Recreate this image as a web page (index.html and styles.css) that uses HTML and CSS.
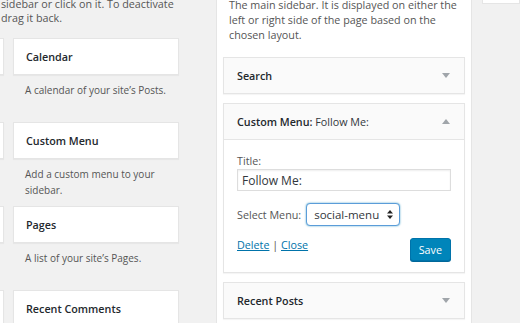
FILE: index.html
```html
<!DOCTYPE html>
<html lang="en">
<head>
  <meta charset="UTF-8">
  <title>Widgets</title>
  <link rel="stylesheet" href="styles.css">
</head>
<body>
<div class="screen">
  <section class="available">
    <p class="intro">sidebar or click on it. To deactivate<br>drag it back.</p>
    <div class="widget-grid">
      <div class="widget-item">
        <div class="widget-card"><h3>Archives</h3></div>
        <p class="widget-desc">A monthly archive of your site's Posts.</p>
      </div>
      <div class="widget-item">
        <div class="widget-card"><h3>Calendar</h3></div>
        <p class="widget-desc">A calendar of your site’s Posts.</p>
      </div>
      <div class="widget-item">
        <div class="widget-card"><h3>Categories</h3></div>
        <p class="widget-desc">A list or dropdown of categories.</p>
      </div>
      <div class="widget-item">
        <div class="widget-card"><h3>Custom Menu</h3></div>
        <p class="widget-desc">Add a custom menu to your sidebar.</p>
      </div>
      <div class="widget-item">
        <div class="widget-card"><h3>Meta</h3></div>
        <p class="widget-desc">Login, RSS, &amp; WordPress.org links.</p>
      </div>
      <div class="widget-item">
        <div class="widget-card"><h3>Pages</h3></div>
        <p class="widget-desc">A list of your site’s Pages.</p>
      </div>
      <div class="widget-item">
        <div class="widget-card"><h3>RSS</h3></div>
        <p class="widget-desc">Entries from any RSS or Atom feed.</p>
      </div>
      <div class="widget-item">
        <div class="widget-card"><h3>Recent Comments</h3></div>
        <p class="widget-desc">Your site’s most recent comments.</p>
      </div>
    </div>
  </section>

  <section class="sidebar-panel">
    <p class="sidebar-desc">The main sidebar. It is displayed on either the left or right side of the page based on the chosen layout.</p>

    <div class="widget">
      <div class="widget-top">
        <h3>Search</h3>
        <svg class="toggle" width="8" height="5" viewBox="0 0 8 5"><polygon points="0,0 8,0 4,5" /></svg>
      </div>
    </div>

    <div class="widget">
      <div class="widget-top">
        <h3>Custom Menu:<span class="in-title"> Follow Me:</span></h3>
        <svg class="toggle" width="8" height="5" viewBox="0 0 8 5"><polygon points="0,5 8,5 4,0" /></svg>
      </div>
      <div class="widget-inside">
        <label class="field-label" for="menu-title">Title:</label>
        <input class="text-input" id="menu-title" type="text" value="Follow Me:">
        <div class="select-row">
          <label for="menu-select">Select Menu:</label>
          <span class="select-wrap">
            <select id="menu-select" class="menu-select">
              <option>social-menu</option>
            </select>
            <svg class="select-arrows" width="6" height="9" viewBox="0 0 6 9"><polygon points="0,3.5 6,3.5 3,0" /><polygon points="0,5.5 6,5.5 3,9" /></svg>
          </span>
        </div>
        <div class="widget-actions">
          <div class="links"><a href="#">Delete</a> | <a href="#">Close</a></div>
          <button type="button" class="save-btn">Save</button>
        </div>
      </div>
    </div>

    <div class="widget">
      <div class="widget-top">
        <h3>Recent Posts</h3>
        <svg class="toggle" width="8" height="5" viewBox="0 0 8 5"><polygon points="0,0 8,0 4,5" /></svg>
      </div>
    </div>
  </section>

  <section class="next-sidebar">
    <div class="next-card"></div>
  </section>
</div>
</body>
</html>
```

FILE: styles.css
```css
body {
  margin: 0;
  background-color: #f1f1f1;
  font-family: "Open Sans", "Liberation Sans", sans-serif;
  font-size: 10.75px;
  color: #555;
  overflow: hidden;
}
.screen {
  display: flex;
  width: 520px;
  height: 323px;
  overflow: hidden;
}
h3 {
  margin: 0;
  font-size: inherit;
  font-weight: 600;
  color: #23282d;
}

/* available widgets */
.available {
  width: 216px;
  flex-shrink: 0;
}
.intro {
  margin: -3px 0 0;
  padding-left: 1px;
  line-height: 14px;
  white-space: nowrap;
}
.widget-grid {
  display: grid;
  grid-template-columns: 166px 166px;
  grid-auto-rows: 84px;
  column-gap: 9px;
  margin: 13px 0 0 -162px;
}
.widget-card {
  height: 37px;
  box-sizing: border-box;
  display: flex;
  align-items: center;
  padding: 0 12px;
  background-color: #fff;
  border: 1px solid #e5e5e5;
  box-shadow: 0 1px 1px rgba(0, 0, 0, 0.04);
}
.widget-desc {
  margin: 0;
  padding: 7px 10px 0 12px;
  font-size: 10px;
  line-height: 16px;
}

/* sidebar */
.sidebar-panel {
  width: 256px;
  flex-shrink: 0;
  box-sizing: border-box;
  background-color: #fff;
  border-left: 1px solid #e5e5e5;
  border-right: 1px solid #e5e5e5;
  padding: 0 6px;
}
.sidebar-desc {
  margin: -2px 0 14px;
  padding: 0 2px 0 6px;
  line-height: 15px;
}
.widget {
  background-color: #fff;
  border: 1px solid #e5e5e5;
  box-shadow: 0 1px 1px rgba(0, 0, 0, 0.04);
  margin-bottom: 9px;
}
.widget-top {
  height: 35px;
  display: flex;
  align-items: center;
  justify-content: space-between;
  padding: 0 14px 0 13px;
  background-color: #fafafa;
}
.in-title {
  font-weight: 400;
  color: #32373c;
}
.toggle polygon {
  fill: #a0a5aa;
}
.widget-inside {
  border-top: 1px solid #e5e5e5;
  padding: 14px 13px 11px;
}
.field-label {
  display: block;
  line-height: 15px;
}
.text-input {
  display: block;
  width: 100%;
  height: 22px;
  box-sizing: border-box;
  margin: 0;
  padding: 0 4px;
  border: 1px solid #ddd;
  box-shadow: inset 0 1px 2px rgba(0, 0, 0, 0.07);
  font-family: inherit;
  font-size: 12px;
  color: #32373c;
}
.select-row {
  display: flex;
  align-items: center;
  gap: 5px;
  margin-top: 12px;
}
.select-wrap {
  position: relative;
  display: block;
}
.menu-select {
  appearance: none;
  -webkit-appearance: none;
  display: block;
  width: 94px;
  height: 23px;
  margin: 0;
  padding: 0 7px;
  background-color: #fff;
  border: 1px solid #5b9dd9;
  border-radius: 4px;
  box-shadow: 0 0 2px rgba(30, 140, 190, 0.8);
  font-family: inherit;
  font-size: 11.5px;
  color: #32373c;
}
.select-arrows {
  position: absolute;
  right: 7px;
  top: 7px;
}
.select-arrows polygon {
  fill: #222;
}
.widget-actions {
  display: flex;
  justify-content: space-between;
  align-items: flex-start;
  margin-top: 12px;
}
.links {
  line-height: 16px;
  margin-top: -1px;
}
.links a {
  color: #0073aa;
}
.save-btn {
  height: 23px;
  padding: 0 8px;
  background-color: #0085ba;
  border: 1px solid #0073aa;
  border-radius: 3px;
  box-shadow: 0 1px 0 #006799;
  color: #fff;
  font-family: inherit;
  font-size: 10.75px;
}

/* next sidebar column */
.next-sidebar {
  flex: 1;
  padding-left: 10px;
}
.next-card {
  height: 32px;
  margin-top: -30px;
  background-color: #fff;
  border: 1px solid #e5e5e5;
}
```
